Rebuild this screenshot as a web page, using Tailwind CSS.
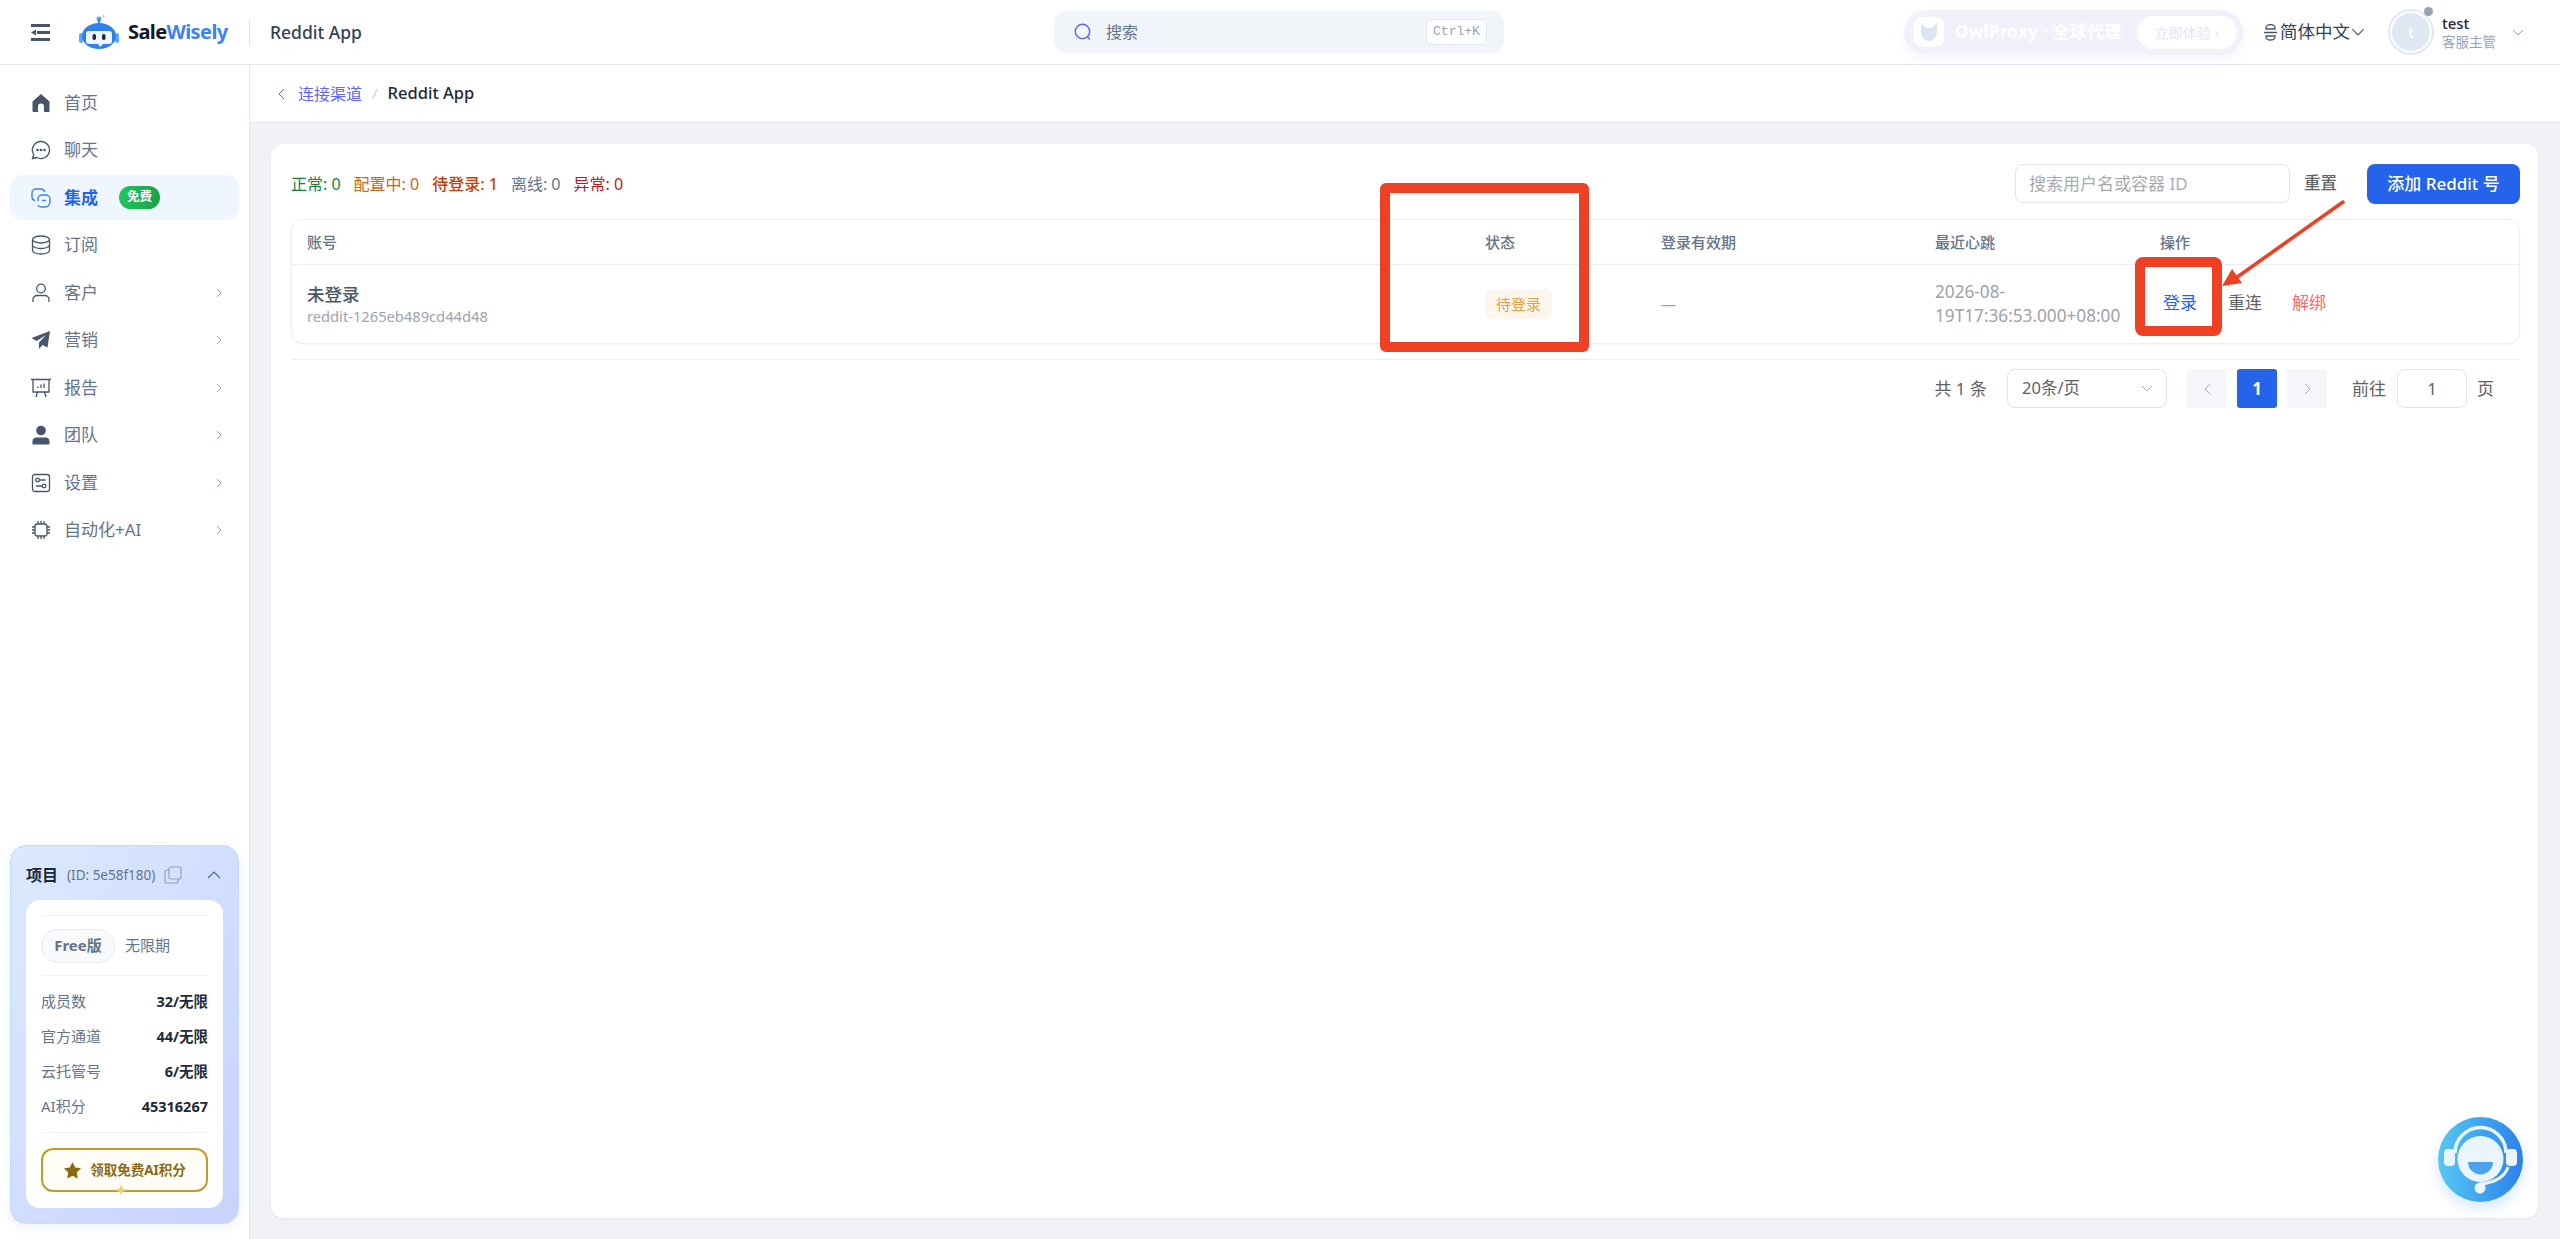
<!DOCTYPE html>
<html lang="zh-CN">
<head>
    <meta charset="UTF-8">
    <title>Reddit App - SaleWisely</title>
    <script src="https://cdn.jsdelivr.net/npm/@tailwindcss/browser@4"></script>
</head>
<body class="relative h-[1239px] overflow-hidden bg-white font-['Noto_Sans','Noto_Sans_CJK_SC',sans-serif] text-[#1e293b]">
    <!-- 顶栏 -->
    <header class="flex h-[65px] items-center border-b border-[#e2e8f0] bg-white">
        <div class="flex w-[250px] items-center pl-[31px]">
            <svg class="h-[17px] w-[19px] shrink-0 text-[#475569]" viewBox="0 0 19 17" fill="currentColor"><rect width="19" height="3"/><rect x="6" y="7" width="13" height="3"/><rect y="14" width="19" height="3"/><path d="M0 8.5 5 5.5v6z"/></svg>
            <svg class="ml-[29px] h-[36px] w-[40px] shrink-0" viewBox="0 0 40 36">
                <circle cx="20" cy="5" r="2.5" fill="#60a5fa"/><rect x="19" y="5" width="2" height="7" fill="#3b82f6"/><circle cx="24.5" cy="2" r="1" fill="#93c5fd"/>
                <rect x="0" y="19" width="4" height="10" rx="2" fill="#60a5fa"/><rect x="36" y="19" width="4" height="10" rx="2" fill="#60a5fa"/>
                <ellipse cx="20" cy="22" rx="17" ry="13" fill="#2f80ed"/>
                <path d="M10 17h20a3 3 0 0 1 3 3v7a3 3 0 0 1-3 3h-6l-3 3-2-3h-9a3 3 0 0 1-3-3v-7a3 3 0 0 1 3-3z" fill="#eff6ff"/>
                <rect x="13.5" y="20" width="3.5" height="6" rx="1.7" fill="#1e293b"/><rect x="23" y="20" width="3.5" height="6" rx="1.7" fill="#1e293b"/>
            </svg>
            <span class="ml-[9px] text-[20px] font-bold tracking-[-0.6px] text-[#0f172a]">Sale<span class="text-[#3b82f6]">Wisely</span></span>
        </div>
        <span class="-ml-px h-[25px] w-px bg-[#dbe4f0]"></span>
        <span class="ml-[20px] text-[17.500px] font-medium text-[#334155]">Reddit App</span>

        <div class="ml-[692px] flex h-[42px] w-[450px] items-center rounded-[12px] bg-[#f1f5f9] pl-[20px] pr-[17px]">
            <svg class="h-[18px] w-[18px] text-[#6366f1]" viewBox="0 0 18 18" fill="none" stroke="currentColor" stroke-width="1.5"><circle cx="8.5" cy="8.5" r="7.2"/><path d="m13.5 14 2.2 2.6"/></svg>
            <span class="ml-[14px] text-[16px] text-[#64748b]">搜索</span>
            <span class="ml-auto flex h-[26px] w-[61px] items-center justify-center rounded-[4px] border border-[#e2e8f0] bg-white font-['Liberation_Mono',monospace] text-[13px] text-[#94a3b8]">Ctrl+K</span>
        </div>

        <div class="relative ml-[400px] flex h-[45px] w-[339px] items-center rounded-full bg-[#f4f0fb] pl-[10px] pr-[6px] shadow-[0_6px_14px_rgba(120,100,180,0.06)]">
            <span class="flex h-[30px] w-[30px] items-center justify-center rounded-[8px] bg-white blur-[0.5px]">
                <svg class="h-[20px] w-[20px] text-[#dbe4f5]" viewBox="0 0 20 20" fill="currentColor"><path d="M2 1l5 5h6l5-5v9c0 5-4 9-8 9s-8-4-8-9z"/></svg>
            </span>
            <span class="ml-[11px] text-[17px] font-bold tracking-[0.3px] text-white blur-[0.5px]">OwlProxy · 全球代理</span>
            <span class="ml-auto flex h-[33px] w-[100px] items-center justify-center rounded-full bg-white text-[14px] font-medium text-[#ece6f7] blur-[0.5px]">立即体验 ›</span>
        </div>

        <div class="ml-[20px] flex items-center">
            <svg class="h-[17px] w-[15px] text-[#475569]" viewBox="0 0 15 17" fill="none" stroke="currentColor" stroke-width="1.3"><path d="M3 4a4.5 3.5 0 0 1 9 0v1H3zM1 8.500h13M3 12h9v1a4.500 3 0 0 1-9 0z"/></svg>
            <span class="ml-[2px] text-[17.500px] leading-none text-[#334155]">简体中文</span>
            <svg class="ml-[1px] h-[8px] w-[14px] text-[#475569]" viewBox="0 0 12 7" fill="none" stroke="currentColor" stroke-width="1"><path d="m1 1 5 5 5-5"/></svg>
        </div>

        <div class="relative ml-[23px] flex h-[46px] w-[46px] items-center justify-center rounded-full border-[2px] border-[#e2e8f0]">
            <span class="flex h-[38px] w-[38px] items-center justify-center rounded-full bg-[#dfe8f3] text-[15px] text-white">t</span>
            <span class="absolute -right-px -top-[4px] h-[9px] w-[9px] rounded-full bg-[#94a3b8]"></span>
        </div>
        <div class="ml-[8px] flex flex-col">
            <span class="text-[15px] font-medium leading-[20px] text-[#1e293b]">test</span>
            <span class="text-[13.500px] leading-[18px] text-[#94a3b8]">客服主管</span>
        </div>
        <svg class="ml-[16px] h-[7px] w-[12px] text-[#94a3b8]" viewBox="0 0 12 7" fill="none" stroke="currentColor" stroke-width="1"><path d="m1 1 5 5 5-5"/></svg>
    </header>

    <div class="flex h-[1174px]">
        <!-- 侧边栏 -->
        <aside class="flex w-[250px] shrink-0 flex-col justify-between border-r border-[#e2e8f0] bg-white px-[10px] pb-[15px] pt-[15px]">
            <nav class="flex flex-col gap-[2.500px] text-[17px] text-[#64748b]">
                <a class="flex h-[45px] items-center gap-[13px] pl-[21px]">
                    <svg class="h-[20px] w-[20px] text-[#475569]" viewBox="0 0 20 20" fill="currentColor"><path d="M10 1 1.500 8.500V18a1 1 0 0 0 1 1H7v-5.500a3 3 0 0 1 6 0V19h4.500a1 1 0 0 0 1-1V8.500z"/></svg>首页
                </a>
                <a class="flex h-[45px] items-center gap-[13px] pl-[21px]">
                    <svg class="h-[20px] w-[20px] text-[#475569]" viewBox="0 0 20 20" fill="none" stroke="currentColor" stroke-width="1.300"><path d="M10 1.500a8.500 8.500 0 1 1-4 16L1.500 18.500l1.200-4A8.500 8.500 0 0 1 10 1.500z"/><circle cx="6.500" cy="10" r=".7" fill="currentColor"/><circle cx="10" cy="10" r=".7" fill="currentColor"/><circle cx="13.500" cy="10" r=".7" fill="currentColor"/></svg>聊天
                </a>
                <a class="flex h-[45px] items-center gap-[13px] rounded-[12px] bg-[#eff6ff] pl-[21px] font-bold text-[#2563eb]">
                    <svg class="h-[20px] w-[20px] text-[#3b82f6]" viewBox="0 0 20 20" fill="none" stroke="currentColor" stroke-width="1.400"><path d="M4 12.500A3.500 3.500 0 0 1 1 9V5a4 4 0 0 1 4-4h5a4 4 0 0 1 3.800 3"/><path d="M7 13V11a4 4 0 0 1 4-4h4a4 4 0 0 1 4 4v3a5 5 0 0 1-5 5H10a3.500 3.500 0 0 1-3-2"/><path d="M11 12.500h4"/></svg>
                    <span>集成</span>
                    <span class="ml-[8px] flex h-[23px] w-[41px] items-center justify-center rounded-full bg-gradient-to-r from-[#22c55e] to-[#16a34a] text-[12.500px] font-bold text-white">免费</span>
                </a>
                <a class="flex h-[45px] items-center gap-[13px] pl-[21px]">
                    <svg class="h-[20px] w-[20px] text-[#475569]" viewBox="0 0 20 20" fill="none" stroke="currentColor" stroke-width="1.300"><ellipse cx="10" cy="4.500" rx="8.500" ry="3.500"/><path d="M1.500 4.500v11c0 2 3.800 3.500 8.500 3.500s8.500-1.500 8.500-3.500v-11M1.500 10c0 2 3.800 3.500 8.500 3.500s8.500-1.500 8.500-3.500"/></svg>订阅
                </a>
                <a class="flex h-[45px] items-center gap-[13px] pl-[21px] pr-[17px]">
                    <svg class="h-[20px] w-[20px] text-[#475569]" viewBox="0 0 20 20" fill="none" stroke="currentColor" stroke-width="1.300"><circle cx="10" cy="5.500" r="4.300"/><path d="M2 19v-2.500a4 4 0 0 1 4-4h8a4 4 0 0 1 4 4V19"/></svg>客户
                    <svg class="ml-auto h-[10px] w-[6px] text-[#94a3b8]" viewBox="0 0 6 10" fill="none" stroke="currentColor"><path d="m1 1 4 4-4 4"/></svg>
                </a>
                <a class="flex h-[45px] items-center gap-[13px] pl-[21px] pr-[17px]">
                    <svg class="h-[20px] w-[20px] text-[#475569]" viewBox="0 0 20 20" fill="currentColor"><path d="M19 1 .500 8l5 3L15 5l-7 7.500V19l3.500-4 5 2.500z"/></svg>营销
                    <svg class="ml-auto h-[10px] w-[6px] text-[#94a3b8]" viewBox="0 0 6 10" fill="none" stroke="currentColor"><path d="m1 1 4 4-4 4"/></svg>
                </a>
                <a class="flex h-[45px] items-center gap-[13px] pl-[21px] pr-[17px]">
                    <svg class="h-[20px] w-[20px] text-[#475569]" viewBox="0 0 20 20" fill="none" stroke="currentColor" stroke-width="1.300"><path d="M0 1.500h20M2 1.500v12.500h16V1.500M6.500 14l-1.500 5M13.500 14l1.500 5M7 10V8.500M10 10V6.500M13 10V5.500"/></svg>报告
                    <svg class="ml-auto h-[10px] w-[6px] text-[#94a3b8]" viewBox="0 0 6 10" fill="none" stroke="currentColor"><path d="m1 1 4 4-4 4"/></svg>
                </a>
                <a class="flex h-[45px] items-center gap-[13px] pl-[21px] pr-[17px]">
                    <svg class="h-[20px] w-[20px] text-[#475569]" viewBox="0 0 20 20" fill="currentColor"><circle cx="10" cy="5.500" r="4.800"/><path d="M1.500 19v-3a4 4 0 0 1 4-3.500h9a4 4 0 0 1 4 3.500v3a1 1 0 0 1-1 .5h-15a1 1 0 0 1-1-.5z"/></svg>团队
                    <svg class="ml-auto h-[10px] w-[6px] text-[#94a3b8]" viewBox="0 0 6 10" fill="none" stroke="currentColor"><path d="m1 1 4 4-4 4"/></svg>
                </a>
                <a class="flex h-[45px] items-center gap-[13px] pl-[21px] pr-[17px]">
                    <svg class="h-[20px] w-[20px] text-[#475569]" viewBox="0 0 20 20" fill="none" stroke="currentColor" stroke-width="1.300"><rect x="1.500" y="1.500" width="17" height="17" rx="2.500"/><circle cx="6.500" cy="7" r="1.800"/><path d="M8.500 7h6M5 13h6"/><circle cx="13" cy="13" r="1.800"/></svg>设置
                    <svg class="ml-auto h-[10px] w-[6px] text-[#94a3b8]" viewBox="0 0 6 10" fill="none" stroke="currentColor"><path d="m1 1 4 4-4 4"/></svg>
                </a>
                <a class="flex h-[45px] items-center gap-[13px] pl-[21px] pr-[17px]">
                    <svg class="h-[20px] w-[20px] text-[#475569]" viewBox="0 0 20 20" fill="none" stroke="currentColor" stroke-width="1.300"><rect x="4" y="4" width="12" height="12" rx="2.500"/><path d="M7 1v3M10 1v3M13 1v3M7 16v3M10 16v3M13 16v3M1 7h3M1 10h3M1 13h3M16 7h3M16 10h3M16 13h3"/></svg>自动化+AI
                    <svg class="ml-auto h-[10px] w-[6px] text-[#94a3b8]" viewBox="0 0 6 10" fill="none" stroke="currentColor"><path d="m1 1 4 4-4 4"/></svg>
                </a>
            </nav>

            <!-- 项目卡片 -->
            <section class="h-[379px] rounded-[16px] border border-[#bfdbfe] bg-gradient-to-br from-[#dbeafe] to-[#c7d2fe] px-[15px] pt-[16px] shadow-[0_4px_10px_rgba(100,116,139,0.1)]">
                <div class="flex h-[26px] items-center">
                    <span class="text-[16px] font-bold text-[#1e293b]">项目</span>
                    <span class="ml-[9px] text-[13.500px] text-[#64748b]">(ID: 5e58f180)</span>
                    <svg class="ml-[9px] h-[18px] w-[18px] text-[#94a3b8]" viewBox="0 0 18 18" fill="none" stroke="currentColor" stroke-width="1.200"><rect x="5" y="1" width="12" height="12" rx="2"/><path d="M5 4H3a2 2 0 0 0-2 2v9a2 2 0 0 0 2 2h9a2 2 0 0 0 2-2v-2"/></svg>
                    <svg class="ml-auto mr-[2px] h-[8px] w-[14px] text-[#4f62b8]" viewBox="0 0 14 8" fill="none" stroke="currentColor" stroke-width="1.200"><path d="m1 7 6-6 6 6"/></svg>
                </div>
                <div class="mt-[12px] h-[308px] rounded-[14px] bg-white px-[15px] pt-[15px]">
                    <div class="flex h-[61px] items-center border-y border-[#eef1f7] text-[15px]">
                        <span class="flex h-[34px] w-[74px] items-center justify-center rounded-full border border-[#e8ecf3] bg-[#f8fafc] font-bold text-[#64748b]">Free版</span>
                        <span class="ml-[10px] text-[#64748b]">无限期</span>
                    </div>
                    <dl class="flex h-[157px] flex-col justify-center gap-[11px] border-b border-[#eef1f7] pb-[2px] text-[15px] leading-[24px]">
                        <div class="flex justify-between"><dt class="text-[#64748b]">成员数</dt><dd class="text-[14.500px] font-bold text-[#1e293b]">32/无限</dd></div>
                        <div class="flex justify-between"><dt class="text-[#64748b]">官方通道</dt><dd class="text-[14.500px] font-bold text-[#1e293b]">44/无限</dd></div>
                        <div class="flex justify-between"><dt class="text-[#64748b]">云托管号</dt><dd class="text-[14.500px] font-bold text-[#1e293b]">6/无限</dd></div>
                        <div class="flex justify-between"><dt class="text-[#64748b]">AI积分</dt><dd class="text-[14.500px] font-bold text-[#1e293b]">45316267</dd></div>
                    </dl>
                    <button class="relative mt-[15px] flex h-[44px] w-full items-center justify-center gap-[8px] rounded-[12px] border-[2px] border-[#c69a2a] bg-[#fffdf6] text-[13.500px] font-bold text-[#8b6914]">
                        <svg class="h-[19px] w-[19px] text-[#8b6914]" viewBox="0 0 20 20" fill="currentColor"><path d="m10 1 2.800 5.800 6.200.9-4.500 4.400 1.100 6.300L10 15.400l-5.600 3 1.100-6.300L1 7.700l6.200-.9z"/></svg>
                        领取免费AI积分
                        <svg class="absolute -bottom-[7px] left-[71px] h-[14px] w-[14px] text-[#f0d060]" viewBox="0 0 14 14" fill="currentColor"><path d="M7 0c.3 4.500 1 6 7 7-6 1-6.700 2.500-7 7-.3-4.500-1-6-7-7 6-1 6.700-2.500 7-7z"/></svg>
                    </button>
                </div>
            </section>
        </aside>

        <!-- 主内容 -->
        <main class="flex min-w-0 flex-1 flex-col bg-[#f0f2f7]">
            <div class="flex h-[58px] items-center border-b border-[#e2e8f0] bg-white pl-[28px] text-[15px]">
                <svg class="h-[12px] w-[7px] text-[#6366f1]" viewBox="0 0 7 12" fill="none" stroke="currentColor"><path d="M6 1 1 6l5 5"/></svg>
                <span class="ml-[13px] text-[16px] text-[#6366f1]">连接渠道</span>
                <span class="mx-[10px] text-[#cbd5e1]">/</span>
                <span class="text-[16.500px] font-medium text-[#1e293b]">Reddit App</span>
            </div>

            <section class="ml-[21px] mt-[21px] h-[1074px] w-[2267px] rounded-[12px] bg-white pl-[20px] pr-[18px] pt-[20px] shadow-[0_1px_3px_rgba(15,23,42,0.06)]">
                <div class="flex h-[39px] items-center">
                    <div class="flex gap-[13px] text-[16px]">
                        <span class="text-[#15803d]">正常: 0</span>
                        <span class="text-[#c2691a]">配置中: 0</span>
                        <span class="font-medium text-[#c2410c]">待登录: 1</span>
                        <span class="text-[#64748b]">离线: 0</span>
                        <span class="text-[#b91c1c]">异常: 0</span>
                    </div>
                    <div class="ml-auto flex h-[39px] w-[275px] items-center rounded-[8px] border border-[#dfe3ec] px-[13px] text-[17px] text-[#a8abb2]">搜索用户名或容器 ID</div>
                    <span class="ml-[14px] w-[34px] text-[16.500px] font-medium text-[#606266]">重置</span>
                    <button class="ml-[29px] h-[40px] w-[153px] rounded-[8px] bg-[#2563eb] text-[17px] font-medium text-white">添加 Reddit 号</button>
                </div>

                <div class="mt-[16px] rounded-[12px] border border-[#eceef4] shadow-[0_1px_2px_rgba(15,23,42,0.04)]">
                    <div class="grid h-[45px] grid-cols-[1177px_176px_274px_225px_1fr] items-center border-b border-[#eceef4] text-[15px] font-medium text-[#64748b]">
                        <span class="pl-[15px]">账号</span>
                        <span class="pl-[16px]">状态</span>
                        <span class="pl-[16px]">登录有效期</span>
                        <span class="pl-[16px]">最近心跳</span>
                        <span class="pl-[16px]">操作</span>
                    </div>
                    <div class="grid h-[78px] grid-cols-[1177px_176px_274px_225px_1fr] items-center">
                        <div class="pl-[15px]">
                            <div class="text-[17.500px] font-medium leading-[24px] text-[#4b5563]">未登录</div>
                            <div class="text-[14.700px] leading-[20px] text-[#9ca3af]">reddit-1265eb489cd44d48</div>
                        </div>
                        <div class="pl-[16px]">
                            <span class="inline-flex h-[30px] w-[67px] items-center justify-center rounded-[6px] bg-[#fdf6ec] text-[15px] text-[#e6a23c]">待登录</span>
                        </div>
                        <div class="pl-[16px] text-[15px] text-[#a1a1aa]">—</div>
                        <div class="w-[225px] pl-[16px] text-[17.200px] leading-[24px] text-[#a1a1aa]">2026-08-<br>19T17:36:53.000+08:00</div>
                        <div class="-mt-[2px] flex items-center pl-[19px] text-[17px]">
                            <span class="text-[#2563eb]">登录</span>
                            <span class="ml-[31px] text-[#606266]">重连</span>
                            <span class="ml-[30px] text-[#f56c6c]">解绑</span>
                        </div>
                    </div>
                </div>

                <div class="mt-[15px] flex h-[49px] items-end justify-end border-t border-[#eceef4] pr-[26px] text-[17px] text-[#606266]">
                    <span class="self-end leading-[39px]">共 1 条</span>
                    <div class="ml-[20px] flex h-[39px] w-[160px] items-center justify-between rounded-[8px] border border-[#dfe3ec] pl-[14px] pr-[13px] text-[16.500px]">
                        20条/页
                        <svg class="h-[7px] w-[12px] text-[#a8abb2]" viewBox="0 0 12 7" fill="none" stroke="currentColor"><path d="m1 1 5 5 5-5"/></svg>
                    </div>
                    <span class="ml-[20px] flex h-[39px] w-[40px] items-center justify-center rounded-[3px] bg-[#f4f6fa]">
                        <svg class="h-[12px] w-[7px] text-[#a8abb2]" viewBox="0 0 7 12" fill="none" stroke="currentColor"><path d="M6 1 1 6l5 5"/></svg>
                    </span>
                    <span class="ml-[10px] flex h-[39px] w-[40px] items-center justify-center rounded-[3px] bg-[#2563eb] font-bold text-white">1</span>
                    <span class="ml-[10px] flex h-[39px] w-[40px] items-center justify-center rounded-[3px] bg-[#f4f6fa]">
                        <svg class="h-[12px] w-[7px] text-[#a8abb2]" viewBox="0 0 7 12" fill="none" stroke="currentColor"><path d="m1 1 5 5-5 5"/></svg>
                    </span>
                    <span class="ml-[25px] leading-[39px]">前往</span>
                    <span class="ml-[11px] flex h-[39px] w-[70px] items-center justify-center rounded-[8px] border border-[#dfe3ec]">1</span>
                    <span class="ml-[10px] leading-[39px]">页</span>
                </div>
            </section>
        </main>
    </div>

    <!-- 截图上的红色标注 -->
    <div class="absolute left-[1380px] top-[183px] h-[169px] w-[209px] rounded-[6px] border-[10px] border-[#ee4023]"></div>
    <div class="absolute left-[2135px] top-[257px] h-[79px] w-[87px] rounded-[8px] border-[10px] border-[#ee4023]"></div>
    <svg class="absolute left-[2215px] top-[195px] h-[100px] w-[135px]" viewBox="0 0 135 100"><path d="M128 7 18 85" stroke="#ee4023" stroke-width="3.500" stroke-linecap="round"/><path d="m7 91 10-17 10 14z" fill="#ee4023"/></svg>

    <!-- 客服按钮 -->
    <button class="absolute left-[2438px] top-[1117px] h-[85px] w-[85px] rounded-full bg-gradient-to-r from-[#56c8f0] to-[#2f80ed] shadow-[0_6px_14px_rgba(47,128,237,0.2)]">
        <svg class="h-[85px] w-[85px]" viewBox="0 0 85 85"><circle cx="42.500" cy="42" r="23" fill="#eaf5fd"/><path d="M17 36a25.500 25.500 0 0 1 51 0" fill="none" stroke="#eaf5fd" stroke-width="3.500"/><rect x="6" y="32" width="11" height="17" rx="4" fill="#eaf5fd"/><rect x="68" y="32" width="11" height="17" rx="4" fill="#eaf5fd"/><path d="M30 45h25a12.500 12.500 0 0 1-25 0z" fill="#4aa3ee"/><path d="M70 50c-3 10-14 16-28 17" fill="none" stroke="#eaf5fd" stroke-width="3"/><circle cx="42" cy="71" r="5.500" fill="#eaf5fd"/></svg>
    </button>
</body>
</html>
